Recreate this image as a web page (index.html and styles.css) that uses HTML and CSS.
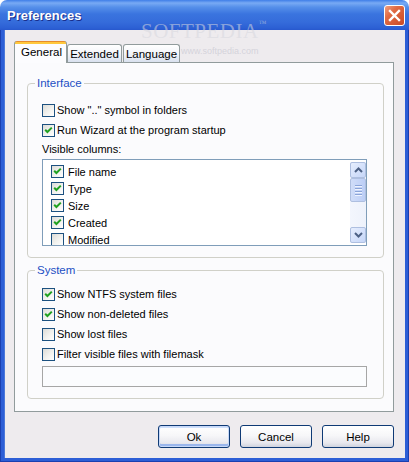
FILE: index.html
```html
<!DOCTYPE html>
<html>
<head>
<meta charset="utf-8">
<link rel="stylesheet" href="styles.css">
</head>
<body>
<div class="window">
  <div class="titlebar">
    <span class="title">Preferences</span>
    <span class="close"><svg width="13" height="13" viewBox="0 0 13 13"><path d="M2 2 L11 11 M11 2 L2 11" stroke="#fff" stroke-width="2.4" stroke-linecap="square"/></svg></span>
  </div>
  <div class="frame">
    <div class="client">
      <div class="tabs">
        <div class="tab sel">General</div>
        <div class="tab t2">Extended</div>
        <div class="tab t3">Language</div>
      </div>
      <div class="panel">
        <fieldset class="group g1">
          <legend>Interface</legend>
          <div class="row"><span class="cb"></span><span>Show ".." symbol in folders</span></div>
          <div class="row"><span class="cb"><svg width="11" height="11" viewBox="0 0 11 11"><path d="M2.2 4.8 L4.4 7 L8.8 2.6" fill="none" stroke="#21a121" stroke-width="2"/></svg></span><span>Run Wizard at the program startup</span></div>
          <div class="label">Visible columns:</div>
          <div class="list">
            <div class="items">
              <div class="item"><span class="cb"><svg width="11" height="11" viewBox="0 0 11 11"><path d="M2.2 4.8 L4.4 7 L8.8 2.6" fill="none" stroke="#21a121" stroke-width="2"/></svg></span><span>File name</span></div>
              <div class="item"><span class="cb"><svg width="11" height="11" viewBox="0 0 11 11"><path d="M2.2 4.8 L4.4 7 L8.8 2.6" fill="none" stroke="#21a121" stroke-width="2"/></svg></span><span>Type</span></div>
              <div class="item"><span class="cb"><svg width="11" height="11" viewBox="0 0 11 11"><path d="M2.2 4.8 L4.4 7 L8.8 2.6" fill="none" stroke="#21a121" stroke-width="2"/></svg></span><span>Size</span></div>
              <div class="item"><span class="cb"><svg width="11" height="11" viewBox="0 0 11 11"><path d="M2.2 4.8 L4.4 7 L8.8 2.6" fill="none" stroke="#21a121" stroke-width="2"/></svg></span><span>Created</span></div>
              <div class="item"><span class="cb"></span><span>Modified</span></div>
            </div>
            <div class="sb">
              <div class="sbtn"><svg width="9" height="6" viewBox="0 0 9 6"><path d="M1 5 L4.5 1.5 L8 5" fill="none" stroke="#4d6185" stroke-width="2"/></svg></div>
              <div class="thumb"><span></span><span></span><span></span><span></span></div>
              <div class="track"></div>
              <div class="sbtn"><svg width="9" height="6" viewBox="0 0 9 6"><path d="M1 1 L4.5 4.5 L8 1" fill="none" stroke="#4d6185" stroke-width="2"/></svg></div>
            </div>
          </div>
        </fieldset>
        <fieldset class="group g2">
          <legend>System</legend>
          <div class="row"><span class="cb"><svg width="11" height="11" viewBox="0 0 11 11"><path d="M2.2 4.8 L4.4 7 L8.8 2.6" fill="none" stroke="#21a121" stroke-width="2"/></svg></span><span>Show NTFS system files</span></div>
          <div class="row"><span class="cb"><svg width="11" height="11" viewBox="0 0 11 11"><path d="M2.2 4.8 L4.4 7 L8.8 2.6" fill="none" stroke="#21a121" stroke-width="2"/></svg></span><span>Show non-deleted files</span></div>
          <div class="row"><span class="cb"></span><span>Show lost files</span></div>
          <div class="row"><span class="cb"></span><span>Filter visible files with filemask</span></div>
          <div class="input"></div>
        </fieldset>
      </div>
      <div class="buttons">
        <div class="btn def">Ok</div>
        <div class="btn">Cancel</div>
        <div class="btn">Help</div>
      </div>
    </div>
  </div>
  <div class="wm">SOFTPEDIA<span class="tm">™</span></div>
  <div class="wm2">www.softpedia.com</div>
</div>
</body>
</html>
```
FILE: styles.css
```css
html, body {
  margin: 0;
  padding: 0;
  background: #ffffff;
}
.window {
  position: relative;
  width: 409px;
  height: 462px;
  display: flex;
  flex-direction: column;
  font-family: "Liberation Sans", Arial, sans-serif;
  font-size: 11px;
  color: #000;
}
.titlebar {
  height: 30px;
  flex: none;
  box-sizing: border-box;
  display: flex;
  align-items: center;
  justify-content: space-between;
  padding: 0 4px 0 7px;
  border-radius: 7px 7px 0 0;
  background: linear-gradient(to bottom, #3f7ee8 0px, #78aaf4 3px, #5690ea 7px, #3a74df 14px, #356cdb 22px, #2c60d4 28px, #2858cd 30px);
}
.title {
  color: #fff;
  font-weight: bold;
  font-size: 13px;
  text-shadow: 1px 1px 0 #1a2f8c;
  margin-top: 1px;
}
.close {
  width: 21px;
  height: 21px;
  box-sizing: border-box;
  border: 1px solid #fff;
  border-radius: 3px;
  background: linear-gradient(135deg, #f0a080 0%, #e06a44 35%, #c94a24 100%);
  display: flex;
  align-items: center;
  justify-content: center;
}
.frame {
  flex: 1;
  display: flex;
  padding: 0 4px 4px 4px;
  background: #2d5ed6;
  box-shadow: inset 1px 0 0 #1b3fb0, inset -1px 0 0 #1b3fb0, inset 0 -1px 0 #1b3fb0;
}
.client {
  flex: 1;
  display: flex;
  flex-direction: column;
  background: #eeebee;
  padding: 11px 11px 10px 10px;
  box-shadow: inset 1px 0 0 #4b78da;
}
.tabs {
  height: 21px;
  display: flex;
  align-items: flex-end;
  flex: none;
}
.tab {
  box-sizing: border-box;
  height: 18px;
  border: 1px solid #919b9c;
  border-bottom: none;
  border-radius: 3px 3px 0 0;
  background: linear-gradient(to bottom, #ffffff, #f3f5fa 50%, #d9e1ef);
  line-height: 19px;
  text-align: center;
  font-size: 11.5px;
}
.tab.sel {
  width: 53px;
  height: 22px;
  margin-bottom: -1px;
  position: relative;
  z-index: 1;
  border-top: none;
  background: linear-gradient(to bottom, #e68b2c 0, #e68b2c 1px, #ffc83c 1px, #ffc83c 3px, #fcfcfe 3px);
  line-height: 22px;
  padding: 0 0 3px 2px;
}
.tab.t2 {
  width: 55px;
}
.tab.t3 {
  width: 57px;
  margin-left: 1px;
}
.panel {
  box-sizing: border-box;
  height: 350px;
  flex: none;
  border: 1px solid #919b9c;
  background: #fbfbfd;
  padding: 0 9px 0 12px;
}
.group {
  margin: 0;
  min-width: 0;
  border: 1px solid #d0d0c8;
  border-radius: 4px;
}
.group legend {
  padding: 0 2px;
  margin-left: -7px;
  line-height: 14px;
  color: #1d4fc4;
  font-size: 11.5px;
}
.g1 {
  margin-top: 13px;
  padding: 10px 16px 11px 14px;
}
.g2 {
  margin-top: 5px;
  padding: 7px 16px 11px 14px;
}
.row {
  height: 20px;
  display: flex;
  align-items: center;
}
.cb {
  width: 13px;
  height: 13px;
  box-sizing: border-box;
  flex: none;
  border: 1px solid #1c5180;
  background: linear-gradient(135deg, #dcdcd7 0%, #f2f2ef 55%, #ffffff 100%);
  margin-right: 2px;
  display: flex;
  align-items: center;
  justify-content: center;
}
.label {
  height: 19px;
  line-height: 19px;
}
.list {
  box-sizing: border-box;
  height: 87px;
  border: 1px solid #7f9db9;
  background: #ffffff;
  display: flex;
  overflow: hidden;
}
.items {
  flex: 1;
  padding: 3px 0 0 8px;
}
.item {
  height: 17px;
  display: flex;
  align-items: center;
}
.item .cb {
  margin-right: 4px;
}
.sb {
  width: 16px;
  margin: 2px 0 2px 0;
  display: flex;
  flex-direction: column;
  background: linear-gradient(to right, #f3f6fd, #eef2fb);
}
.sbtn {
  height: 16px;
  box-sizing: border-box;
  border: 1px solid #aebfe0;
  border-radius: 2px;
  background: linear-gradient(135deg, #e6eefe, #c6d6f8);
  display: flex;
  align-items: center;
  justify-content: center;
}
.thumb {
  height: 24px;
  box-sizing: border-box;
  border: 1px solid #aebfe0;
  border-radius: 2px;
  background: linear-gradient(to right, #d0ddf8, #bccef6);
  display: flex;
  flex-direction: column;
  align-items: center;
  justify-content: center;
  gap: 1px;
}
.thumb span {
  width: 7px;
  height: 1px;
  background: #8aa4d8;
  border-bottom: 1px solid #eef3fe;
}
.track {
  flex: 1;
}
.input {
  margin-top: 2px;
  height: 21px;
  box-sizing: border-box;
  border: 1px solid #a6a6a6;
  background: #fbfcfe;
}
.buttons {
  margin-top: 13px;
  display: flex;
  justify-content: flex-end;
  gap: 10px;
}
.btn {
  width: 72px;
  height: 23px;
  box-sizing: border-box;
  border: 1px solid #0f3a75;
  border-radius: 3px;
  background: linear-gradient(to bottom, #ffffff 0%, #f7f7f9 45%, #e8e8ee 80%, #cfd3de 100%);
  display: flex;
  align-items: center;
  justify-content: center;
  font-size: 11.5px;
}
.btn.def {
  box-shadow: inset 0 0 0 1px #c6d8f8, inset 0 -2px 0 1px #9ab6ec, inset 0 1px 0 1px #cfe0fc;
}
.wm {
  position: absolute;
  left: 141px;
  top: 19px;
  font-family: "Liberation Serif", serif;
  font-size: 21px;
  letter-spacing: 0.5px;
  color: rgba(215, 215, 222, 0.55);
  pointer-events: none;
}
.wm .tm {
  font-size: 8px;
  vertical-align: top;
}
.wm2 {
  position: absolute;
  left: 181px;
  top: 46px;
  font-family: "Liberation Sans", sans-serif;
  font-size: 9px;
  color: rgba(200, 200, 210, 0.7);
}
```
